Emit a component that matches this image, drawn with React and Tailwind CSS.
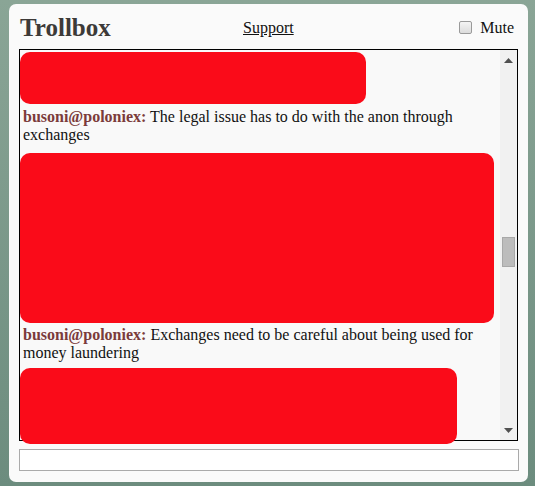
import React from 'react';

const serif = { fontFamily: '"Liberation Serif", "DejaVu Serif", serif' };

function Message({ user, text }) {
  return (
    <p className="px-[3px] text-[16px] leading-[18px] text-[#111]">
      <span className="font-bold text-[#7b3b3b]">{user}:</span> {text}
    </p>
  );
}

function Scrollbar() {
  return (
    <div className="relative flex w-[17px] shrink-0 flex-col items-center bg-[#f1f1f1] py-[6px]">
      <svg width="9" height="5" viewBox="0 0 9 5" className="mt-[2px]">
        <path d="M0 5 L4.5 0 L9 5 Z" fill="#505050" />
      </svg>
      <div className="mt-[174px] h-[30px] w-[13px] border border-[#a8a8a8] bg-[#bcbcbc]" />
      <div className="flex-1" />
      <svg width="9" height="5" viewBox="0 0 9 5" className="mb-[1px]">
        <path d="M0 0 L9 0 L4.5 5 Z" fill="#505050" />
      </svg>
    </div>
  );
}

export default function App() {
  return (
    <div
      className="h-[486px] w-[535px] bg-gradient-to-b from-[#8aa596] to-[#6c8c7e] pl-[9px] pt-[4px]"
      style={serif}
    >
      <div className="flex h-[478px] w-[519px] flex-col rounded-[7px] bg-[#fafafa]">
        <div className="flex h-[45px] items-center px-[11px] pt-[2px]">
          <h1 className="w-[223px] text-[25px] font-bold leading-none text-[#3d3a38]">Trollbox</h1>
          <a href="#" className="text-[16px] text-[#111] underline">Support</a>
          <div className="flex-1" />
          <label className="mr-[3px] flex items-center gap-[8px] text-[16px] text-[#111]">
            <span className="h-[13px] w-[13px] rounded-[2px] border border-[#9a9a9a] bg-gradient-to-b from-[#f4f4f4] to-[#dcdcdc]" />
            Mute
          </label>
        </div>

        <div className="ml-[10px] flex h-[392px] w-[499px] border border-black bg-[#f9f9f9]">
          <div className="flex-1">
            <div className="h-[2px] overflow-hidden">
              <p className="-mt-[15px] px-[3px] text-[16px] leading-[18px] text-[#111]">
                <span className="font-bold text-[#7b3b3b]">bitcoin:</span> actual one is a cent the other for
              </p>
            </div>
            <div className="h-[52px] w-[346px] rounded-[10px] bg-[#fa0b19]" />
            <div className="pt-[4px]">
              <Message user="busoni@poloniex" text="The legal issue has to do with the anon through exchanges" />
            </div>
            <div className="mt-[9px] h-[170px] w-[474px] rounded-[10px] bg-[#fa0b19]" />
            <div className="pt-[3px]">
              <Message user="busoni@poloniex" text="Exchanges need to be careful about being used for money laundering" />
            </div>
            <div className="mt-[6px] h-[76px] w-[437px] rounded-[10px] bg-[#fa0b19]" />
          </div>
          <Scrollbar />
        </div>

        <input
          type="text"
          className="ml-[10px] mt-[8px] h-[22px] w-[500px] border border-[#aaaaaa] bg-white"
        />
      </div>
    </div>
  );
}
